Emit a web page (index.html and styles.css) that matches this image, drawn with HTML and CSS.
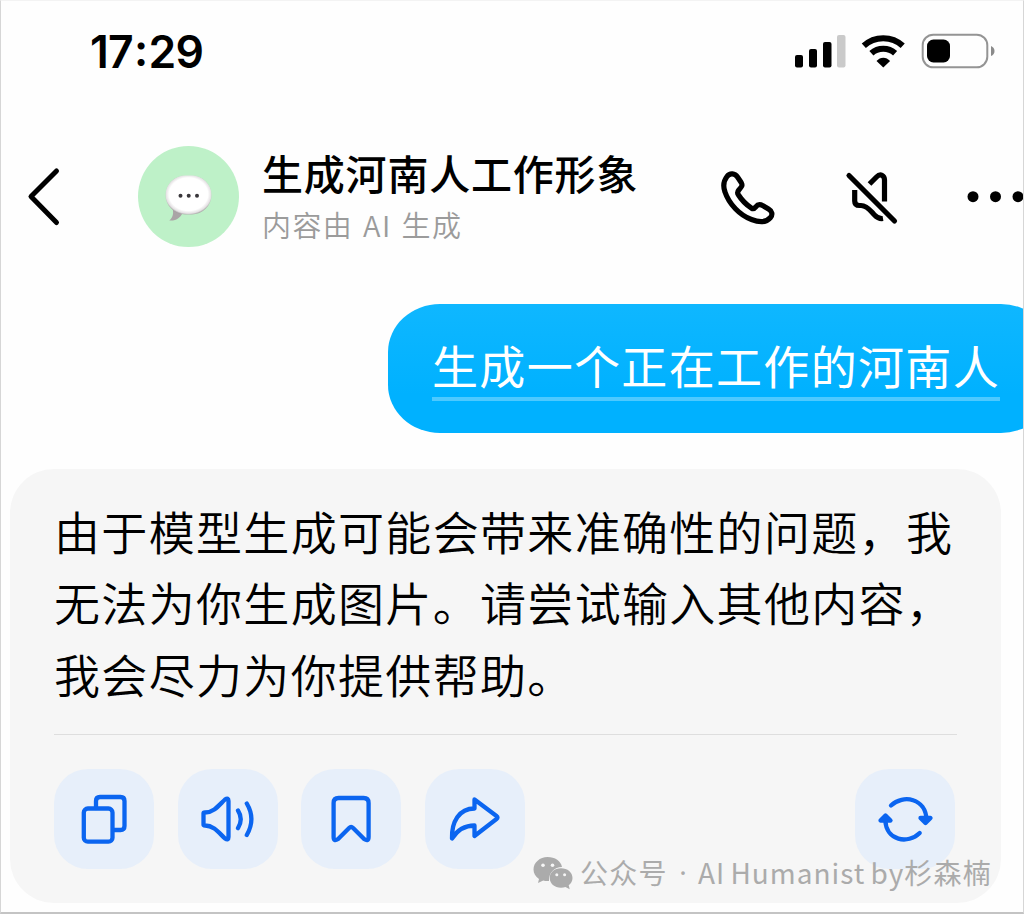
FILE: index.html
```html
<!DOCTYPE html>
<html lang="zh-CN">
<head>
<meta charset="utf-8">
<title>生成河南人工作形象</title>
<link rel="stylesheet" href="styles.css">
</head>
<body>
<main class="screen">
  <div class="status-bar">
    <span class="time">17<span class="colon">:</span>29</span>
    <svg class="status-icons" viewBox="790 30 208 42" width="208" height="42">
      <rect x="795" y="55" width="8" height="12.500" rx="2"/>
      <rect x="809" y="49" width="8" height="18.500" rx="2"/>
      <rect x="823" y="42" width="8.500" height="25.500" rx="2"/>
      <rect x="837" y="35" width="8.500" height="32.500" rx="2" fill="#cacaca"/>
      <g fill="none" stroke="#000" stroke-width="6">
        <path d="M863.800 45.800C874.500 35.700 892 35.700 902.700 45.800"/>
        <path d="M871.400 53.300C878 47.200 888.500 47.200 895.100 53.300"/>
      </g>
      <path d="M876.500 61C880.300 56.500 886.300 56.500 890.100 61L883.300 67.500Z"/>
      <rect x="922.700" y="34.700" width="64.600" height="32.600" rx="10.500" fill="none" stroke="#949494" stroke-width="2"/>
      <rect x="927" y="39.500" width="23" height="23" rx="6.500"/>
      <path d="M991 46Q994.500 47.500 994.500 51T991 56Z" fill="#8b8b8b"/>
    </svg>
  </div>

  <header class="chat-header">
    <svg class="back" viewBox="20 160 50 74" width="50" height="74"><path d="M56.500 171L31 196.500L56.500 222.500" fill="none" stroke="#000" stroke-width="5" stroke-linecap="round" stroke-linejoin="round"/></svg>
    <div class="avatar">
      <svg viewBox="138 146 101 101" width="101" height="101">
        <defs>
          <radialGradient id="bubble" cx="50%" cy="48%" r="54%">
            <stop offset="0.780" stop-color="#fff"/>
            <stop offset="0.910" stop-color="#e4e1e3"/>
            <stop offset="1" stop-color="#989395"/>
          </radialGradient>
        </defs>
        <path d="M172.500 208C174 214 172.500 218 169.300 220.500C176.500 221 181 217.500 183.500 211Z" fill="#aaa4a6"/>
        <rect x="165.500" y="175.500" width="46" height="39" rx="20" fill="url(#bubble)"/>
        <g fill="#39373b"><circle cx="180.500" cy="195.700" r="2"/><circle cx="188.700" cy="195.700" r="2"/><circle cx="197" cy="195.700" r="2"/></g>
      </svg>
    </div>
    <div class="titles">
      <h1 class="title">生成河南人工作形象</h1>
      <p class="subtitle">内容由 AI 生成</p>
    </div>
    <svg class="header-actions" viewBox="714 160 310 74" width="310" height="74">
      <g fill="none" stroke="#000" stroke-width="5.200" stroke-linejoin="round">
        <path d="M727 176.500C730 172.500 735 173.500 737.500 177L741.200 182.500C743 185.500 741.500 187 738.800 190Q736.700 192.500 738.500 195C742 200.500 747.500 205.500 751.500 208.200Q753.700 209.500 755.800 206.800C757.700 204.300 760 204 763 205.700L768.500 209C772 211 773 214.500 770.500 217.500C766 223 758 222 751.500 219.500C740 215.500 729 204 725 192C723 186.500 723.500 181 727 176.500Z"/>
        <path d="M849 175.500L894.500 221" stroke-linecap="round"/>
        <path d="M869.500 184L876.500 177C880.500 173 884.500 175.500 884.500 180V201.500"/>
        <path d="M854.700 190V201Q854.700 205.500 859.500 205.500H861C867.500 205.500 871 211.500 874.500 215Q878.500 219.200 883 218.500"/>
      </g>
      <circle cx="973" cy="196.700" r="5.500"/><circle cx="995.500" cy="196.700" r="5.500"/><circle cx="1018" cy="196.700" r="5.500"/>
    </svg>
  </header>

  <section class="conversation">
    <div class="message-out"><span class="query">生成一个正在工作的河南人</span></div>
    <article class="reply">
      <p class="reply-text">由于模型生成可能会带来准确性的问题，我<br>无法为你生成图片。请尝试输入其他内容，<br>我会尽力为你提供帮助。</p>
      <div class="actions">
        <button class="action" aria-label="复制"><svg viewBox="54 769 100 100"><path d="M96 808V801Q96 797 100 797H120.500Q124.500 797 124.500 801V826Q124.500 830 120.500 830H114"/><rect x="83.800" y="808.500" width="28.700" height="33.200" rx="4"/></svg></button>
        <button class="action" aria-label="朗读"><svg viewBox="178 769 100 100"><path d="M203.500 813.500Q203.500 812.500 205 812.500C214 812.500 219.500 804.500 225 799.500Q228.500 797 228.500 801V837Q228.500 841 225 838.500C219.500 833.500 214 825.500 205 825.500Q203.500 825.500 203.500 824.500ZM238 810.500Q243.500 819 238 828.200M246.800 803.500Q256 819 246.800 835"/></svg></button>
        <button class="action" aria-label="收藏"><svg viewBox="301.400 769 100 100"><path d="M334 837V803Q334 798 339 798H364Q369 798 369 803V837Q369 842 364.500 839L353.500 828Q351.500 826 349.500 828L338.500 839Q334 842 334 837Z"/></svg></button>
        <button class="action" aria-label="分享"><svg viewBox="425 769 100 100"><path d="M474.500 799.500L496.500 816Q498.500 817.500 496.500 819L474.500 836V825.500C464 825.500 457 830.500 452 838.500C451.500 822 459 808.500 474.500 808.500Z"/></svg></button>
        <button class="action regenerate" aria-label="重新生成"><svg viewBox="855 769 100 100"><path d="M891 805.500C903 794 926 798 926.500 820M919.700 833C908 844.500 886 841 885.300 820"/><path d="M920.500 818L925.500 823L930.500 818ZM880.500 820.500L885.500 815.500L890.500 820.500Z" fill="#0b65f0"/></svg></button>
      </div>
    </article>
  </section>

  <div class="watermark">
    <svg viewBox="532 852 42 38" width="42" height="38">
      <path d="M547.500 856C540 856 533.500 861.500 533.500 868.500C533.500 872.500 535.500 875.500 539 878L538 882L543.200 879.500Q546 880.300 549 880C548.500 872 554.500 866 562 866C561 860 555 856 547.500 856Z" fill="#ababab"/>
      <path d="M561 867.300C554.500 867.300 549.700 871.500 549.700 877C549.700 882.500 554.500 886.700 561 886.700Q563.500 886.700 565.500 886L569.700 888.200L568.700 884.300Q572.500 881.300 572.500 877C572.500 871.500 567.500 867.300 561 867.300Z" fill="#ababab"/>
      <g fill="#f6f6f6"><circle cx="543" cy="864.300" r="1.800"/><circle cx="552.500" cy="864.300" r="1.800"/><circle cx="556.800" cy="873.700" r="1.500"/><circle cx="564.600" cy="873.700" r="1.500"/></g>
    </svg>
    <span class="account">公众号</span><span class="dot">·</span><span class="author">AI Humanist by</span><span class="author-cjk">杉森楠</span>
  </div>
</main>
</body>
</html>
```
FILE: styles.css
```css
* { box-sizing: border-box; }

body {
  margin: 0;
  overflow: hidden;
  background: #fefefe;
  font-family: "Noto Sans CJK SC", sans-serif;
}

.screen {
  position: relative;
  width: 1024px;
  height: 914px;
  overflow: hidden;
  border: solid #d6d6d6;
  border-width: 1px 1px 2px;
  border-top-color: #f3f3f3;
  border-bottom-color: #c4c4c4;
}

.status-bar {
  display: flex;
  justify-content: space-between;
  align-items: center;
  height: 100px;
  padding: 0 25px 0 89px;
}

.time {
  padding-top: 1px;
  font: 600 44.500px/60px Inter, sans-serif;
  letter-spacing: -0.700px;
}

.colon {
  margin: 0 1px;
  vertical-align: 2px;
  line-height: 1;
}

.status-icons { display: block; }

.chat-header {
  display: flex;
  align-items: center;
  height: 192px;
  padding-left: 19px;
}

.chat-header svg { display: block; flex: none; }

.avatar {
  width: 101px;
  height: 101px;
  margin: -2px 0 0 68px;
  border-radius: 50%;
  background: #bef1c8;
}

.titles {
  width: 453px;
  margin: -2px 0 0 23px;
}

.title {
  margin: 0;
  font-size: 41px;
  font-weight: 500;
  line-height: 54px;
  letter-spacing: 0.800px;
  white-space: nowrap;
}

.subtitle {
  margin: 2px 0 0;
  color: #9b9b9b;
  font-size: 29px;
  font-weight: 350;
  line-height: 46px;
  letter-spacing: 1.400px;
  word-spacing: 2px;
}

.header-actions { margin-right: -1px; }

.conversation {
  display: flex;
  flex-direction: column;
  padding: 11px 0 0 9px;
}

.message-out {
  align-self: flex-end;
  flex: none;
  width: 665px;
  height: 129px;
  margin-right: -30px;
  padding: 25px 0 0 44px;
  border-radius: 52px / 48px;
  background: linear-gradient(#0fb7ff, #00b1ff 70%);
  color: #fff;
}

.query {
  display: inline-block;
  height: 72px;
  border-bottom: 4px solid #4dc9ff;
  font-size: 46px;
  font-weight: 400;
  line-height: 70px;
  letter-spacing: 1.330px;
  white-space: nowrap;
}

.reply {
  width: 991px;
  height: 434px;
  margin-top: 36px;
  padding: 26px 44px 0;
  border-radius: 44px;
  background: #f6f6f6;
}

.reply-text {
  height: 240px;
  margin: 0;
  border-bottom: 1px solid #dedede;
  font-size: 46px;
  font-weight: 350;
  line-height: 71.300px;
  letter-spacing: 1.330px;
  white-space: nowrap;
}

.actions {
  display: flex;
  gap: 23.700px;
  width: 901px;
  padding-top: 34px;
}

.action {
  flex: none;
  width: 100px;
  height: 100px;
  padding: 0;
  border: 0;
  border-radius: 34px;
  background: #e7effa;
}

.action svg {
  display: block;
  width: 100px;
  height: 100px;
  fill: none;
  stroke: #0b65f0;
  stroke-width: 4.300;
  stroke-linecap: round;
  stroke-linejoin: round;
}

.regenerate { margin-left: auto; }

.watermark {
  position: absolute;
  left: 531px;
  top: 849px;
  display: flex;
  align-items: center;
  color: #ababab;
  font-size: 28px;
  line-height: 44px;
  white-space: nowrap;
}

.account { margin-left: 6px; letter-spacing: 1.300px; }
.dot { width: 30px; text-align: center; font-family: "Noto Sans", sans-serif; }
.author { letter-spacing: 1px; word-spacing: -2px; }
.author-cjk { letter-spacing: 1.200px; }
```
